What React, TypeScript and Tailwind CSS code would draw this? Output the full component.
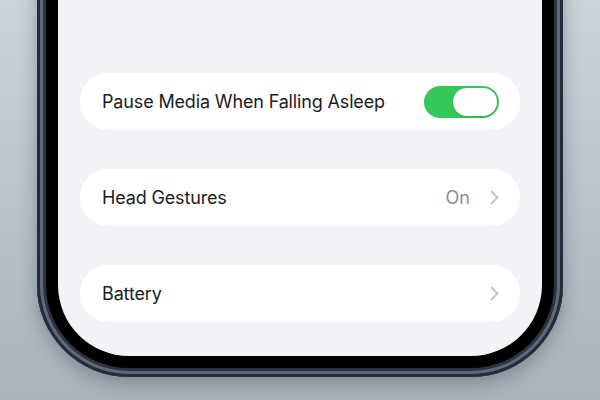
import React from "react";

function Chevron() {
  return (
    <svg width="9" height="15" viewBox="0 0 9 15" fill="none">
      <path d="M1.5 1.5L7.5 7.5L1.5 13.5" stroke="#c4c4c8" strokeWidth="2" strokeLinecap="round" strokeLinejoin="round" />
    </svg>
  );
}

function Toggle() {
  return (
    <div className="w-[75px] h-[32px] rounded-full bg-[#34c759] p-[2px] flex justify-end">
      <div className="w-[44px] h-[28px] rounded-full bg-white shadow-[0_1px_2px_rgba(0,0,0,0.15)]" />
    </div>
  );
}

function Row({ label, children }: { label: string; children?: React.ReactNode }) {
  return (
    <div className="h-[57px] rounded-full bg-white flex items-center justify-between pl-[22px] pr-[21px]">
      <span className="text-[18px] text-[#1c1c1e] tracking-[-0.15px]">{label}</span>
      <div className="flex items-center gap-[20px]">{children}</div>
    </div>
  );
}

export default function App() {
  return (
    <div
      className="w-[600px] h-[400px] overflow-hidden bg-gradient-to-b from-[#cdd4d9] to-[#a8b3bb] px-[37px]"
      style={{ fontFamily: "Inter, 'Noto Sans', sans-serif" }}
    >
      {/* titanium band with highlight, black bezel, then the display */}
      <div className="-mt-[30px] h-[407px] rounded-b-[92px] bg-black px-[21px] pb-[21px] shadow-[inset_0_0_0_3px_#242b39,inset_0_0_0_6px_#5f687c,inset_0_0_0_9px_#2c3343,0_6px_18px_rgba(40,50,60,0.35)]">
        <div className="h-full rounded-b-[71px] bg-[#f2f2f7] px-[22px] pt-[103px] flex flex-col gap-[39px]">
          <Row label="Pause Media When Falling Asleep">
            <Toggle />
          </Row>
          <Row label="Head Gestures">
            <span className="text-[18px] text-[#8e8e93]">On</span>
            <Chevron />
          </Row>
          <Row label="Battery">
            <Chevron />
          </Row>
        </div>
      </div>
    </div>
  );
}
